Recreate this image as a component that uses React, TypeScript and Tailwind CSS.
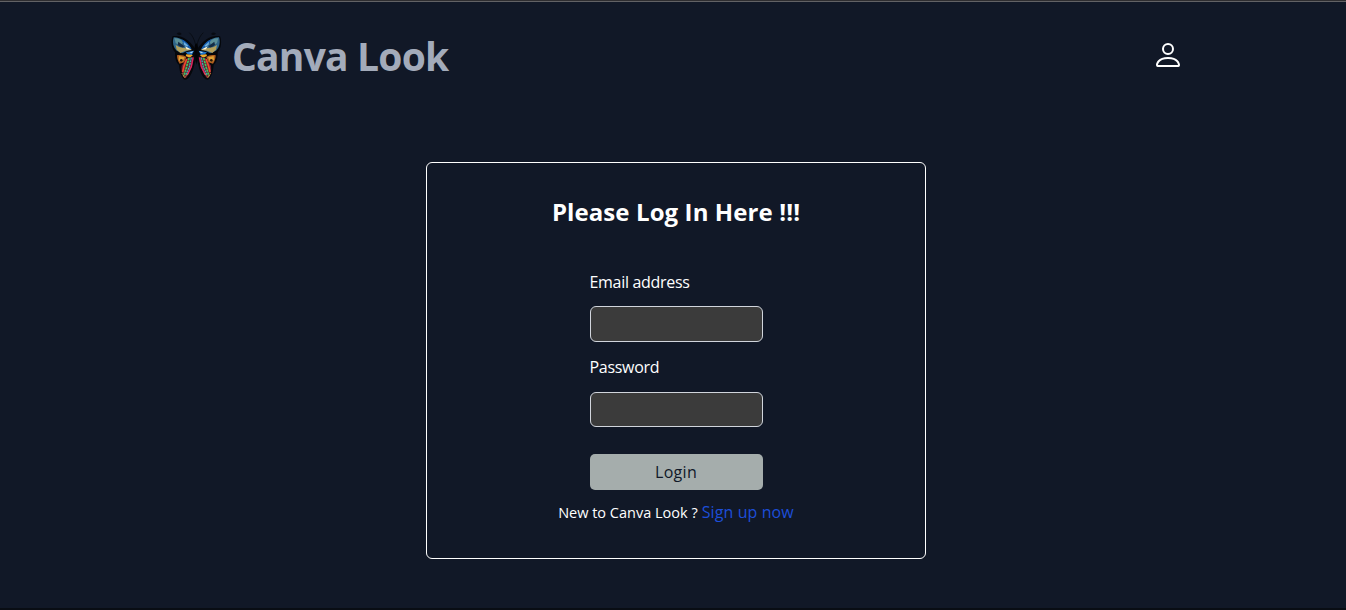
import { BsPerson } from "react-icons/bs";

function Wing() {
  return (
    <g>
      <path d="M90 70C72 42 45 28 23 34C17 48 19 70 30 82C30 98 32 112 42 120C44 142 50 160 59 164C74 166 86 138 92 100Z" fill="#05070b" />
      <path d="M26 37C21 52 25 68 35 77L52 85L78 72C68 52 46 36 26 37Z" fill="#2f6488" />
      <path d="M28 40C38 38 50 44 56 52L44 62L32 54Z" fill="#5b8f98" />
      <path d="M50 43C64 49 74 60 80 73L64 66L54 54Z" fill="#145cae" />
      <path d="M56 50L70 62L66 65L57 59Z" fill="#6fb0dc" />
      <path d="M40 50L58 64L52 69L38 60Z" fill="#152c44" />
      <path d="M32 60Q44 70 60 69L82 75L62 77L46 84L35 74Z" fill="#b3a05c" />
      <path d="M60 64L70 69L80 74L65 73Z" fill="#fbf6dc" />
      <path d="M62 82L87 77L80 91L68 88Z" fill="#1f74c8" />
      <path d="M73 82L85 79L80 85Z" fill="#b7d7e8" />
      <path d="M36 91C46 88 58 91 64 96L58 112L44 116C38 108 36 98 36 91Z" fill="#b3601f" />
      <path d="M42 93L59 97L51 112L41 105Z" fill="#dda334" />
      <circle cx="49" cy="106" r="4" fill="#29160c" />
      <path d="M64 88L84 90L74 98L62 93Z" fill="#f0a828" />
      <path d="M66 98L87 95C85 116 76 142 62 160C52 156 48 138 50 122Z" fill="#6a1c30" />
      <path d="M65 102L57 124L53 141" stroke="#ee4a2a" strokeWidth="5" fill="none" />
      <path d="M72 99L64 128L56 153" stroke="#3fc75a" strokeWidth="5" fill="none" strokeDasharray="7 2" />
      <path d="M79 98L73 126L62 150" stroke="#2fb8b4" strokeWidth="4" fill="none" strokeDasharray="6 2" />
      <path d="M84 98L79 125L67 149" stroke="#dc2560" strokeWidth="4" fill="none" />
      <path d="M51 145L59 158L69 145" stroke="#e0a040" strokeWidth="3" strokeDasharray="3 2" fill="none" />
      <path d="M92 60Q86 34 73 23" stroke="#05070b" strokeWidth="2" fill="none" />
      <path d="M35 26Q43 19 50 27Q44 34 35 26Z" fill="#080b12" />
    </g>
  );
}

function Butterfly() {
  return (
    <svg viewBox="0 0 186 180" className="mb-px h-[60px] w-[62px] shrink-0" aria-hidden="true">
      <Wing />
      <g transform="translate(188 0) scale(-1 1)">
        <Wing />
      </g>
      <path d="M94 55Q101 60 98 76L97 106L94 119L91 106L90 76Q87 60 94 55Z" fill="#020306" />
    </svg>
  );
}

function Field({ label, type, id, inputClass }: { label: string; type: string; id: string; inputClass: string }) {
  return (
    <div className="flex flex-col">
      <label htmlFor={id} className="h-6 whitespace-nowrap text-base leading-6 tracking-[-0.3px]">
        {label}
      </label>
      <input
        id={id}
        type={type}
        className={`w-[173px] rounded-md border border-gray-300 bg-[#3b3b3b] px-3 outline-none ${inputClass}`}
      />
    </div>
  );
}

export default function App() {
  return (
    <div className="flex h-[610px] w-full flex-col border-t border-b-2 border-t-[#2e2d30] border-b-[#090d14] bg-[#111827] font-['Open_Sans','Noto_Sans',sans-serif] text-white">
      <header className="flex h-[109px] items-center justify-between border-t border-[#626265] pr-[162px] pb-0.5 pl-[165px]">
        <div className="flex items-center gap-[5px]">
          <Butterfly />
          <h1 className="whitespace-nowrap pt-px text-[39px] leading-[48px] font-bold tracking-[-0.8px] text-[#a3abba]">Canva Look</h1>
        </div>
        <BsPerson className="size-8" />
      </header>
      <main className="mt-[52px] ml-[426px] flex h-[397px] w-[500px] flex-col items-center rounded-md border border-white pt-[31px]">
        <h2 className="h-9 whitespace-nowrap text-2xl leading-9 font-bold tracking-[0.1px]">Please Log In Here !!!</h2>
        <form className="mt-10 flex w-[173px] flex-col">
          <Field label="Email address" type="email" id="email" inputClass="mt-3 h-9" />
          <div className="mt-[13px]">
            <Field label="Password" type="password" id="password" inputClass="mt-[13px] h-[35px]" />
          </div>
          <button type="button" className="mt-[27px] h-9 rounded-[5px] bg-[#a5adac] text-base tracking-[0.3px] text-gray-900">
            Login
          </button>
        </form>
        <p className="mt-[10px] flex items-baseline gap-1 whitespace-nowrap leading-6">
          <span className="text-[14.5px] leading-6">New to Canva Look ?</span>
          <a href="#" className="text-base leading-6 tracking-[0.1px] text-[#1d4ed8]">Sign up now</a>
        </p>
      </main>
    </div>
  );
}
